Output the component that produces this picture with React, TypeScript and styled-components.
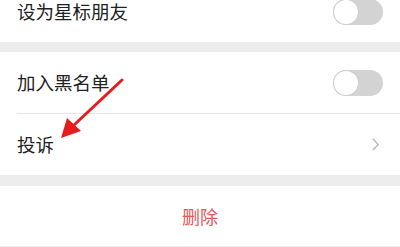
import styled, { createGlobalStyle } from 'styled-components'

const GlobalStyle = createGlobalStyle`
  html, body {
    margin: 0;
    padding: 0;
    background: #ededed;
    font-family: "Noto Sans CJK SC", "Noto Sans", sans-serif;
  }
`

const rowsTop = [{ label: '设为星标朋友', kind: 'toggle' }]
const rowsMid = [
  { label: '加入黑名单', kind: 'toggle' },
  { label: '投诉', kind: 'chevron' },
]

export default function App() {
  return (
    <Screen>
      <GlobalStyle />
      <List>
        <Group>
          {rowsTop.map((r) => (
            <Row key={r.label}>
              <Label>{r.label}</Label>
              <Toggle />
            </Row>
          ))}
        </Group>
        <Group>
          {rowsMid.map((r) => (
            <Row key={r.label}>
              <Label>{r.label}</Label>
              {r.kind === 'toggle' ? (
                <Toggle />
              ) : (
                <Chevron viewBox="0 0 10 16">
                  <path d="M2 1.5 L8 8 L2 14.5" />
                </Chevron>
              )}
            </Row>
          ))}
        </Group>
        <Group>
          <DangerRow>删除</DangerRow>
        </Group>
      </List>
      <Arrow viewBox="0 0 400 247">
        <line x1="122" y1="80" x2="74" y2="125" />
        <polygon points="61,138 67,118 81,131" />
      </Arrow>
    </Screen>
  )
}

function Toggle() {
  return (
    <Track>
      <Knob />
    </Track>
  )
}

const Screen = styled.div`
  position: relative;
  width: 400px;
  height: 247px;
  overflow: hidden;
  background: #ededed;
`

const List = styled.div`
  display: flex;
  flex-direction: column;
  gap: 10px;
  margin-top: -19px;
`

const Group = styled.div`
  background: #fff;

  & + & + & {
    margin-top: 1px;
  }
`

const Row = styled.div`
  display: flex;
  align-items: center;
  justify-content: space-between;
  height: 61px;
  margin-left: 17px;
  padding-right: 17px;

  & + & {
    border-top: 1px solid #e6e6e6;
  }
`

const Label = styled.span`
  font-size: 18.5px;
  color: #222;
  line-height: 1;
`

const Track = styled.div`
  display: flex;
  align-items: center;
  width: 50px;
  height: 26px;
  border-radius: 13px;
  background: #d3d3d3;
  box-sizing: border-box;
  padding: 1px;
`

const Knob = styled.div`
  width: 24px;
  height: 24px;
  border-radius: 50%;
  background: #fff;
  box-shadow: 0 0 0 1px #cfcfcf;
`

const Chevron = styled.svg`
  width: 9px;
  height: 15px;
  margin-right: 3px;
  fill: none;
  stroke: #b8b8b8;
  stroke-width: 1.6;
`

const DangerRow = styled.div`
  display: flex;
  align-items: center;
  justify-content: center;
  height: 60px;
  font-size: 18px;
  color: #e05a5a;
`

const Arrow = styled.svg`
  position: absolute;
  inset: 0;
  width: 400px;
  height: 247px;
  pointer-events: none;

  line {
    stroke: #e51c1c;
    stroke-width: 3;
    stroke-linecap: round;
  }

  polygon {
    fill: #e51c1c;
  }
`
